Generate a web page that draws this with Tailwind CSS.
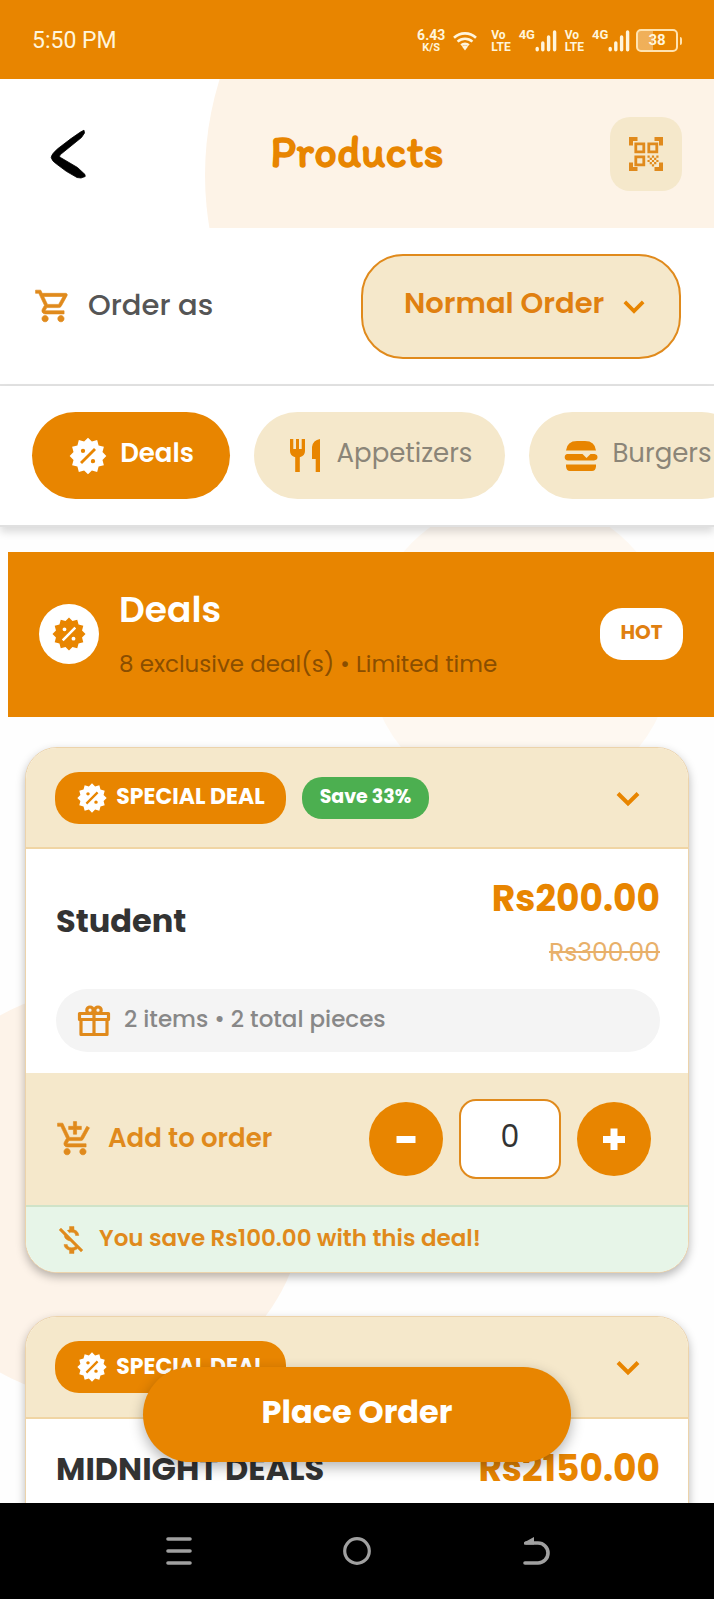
<!DOCTYPE html>
<html lang="en">
<head>
<meta charset="utf-8">
<meta name="viewport" content="width=device-width, initial-scale=1">
<title>Products</title>
<script src="https://cdn.jsdelivr.net/npm/@tailwindcss/browser@4"></script>
</head>
<body class="bg-white font-[Poppins,Inter,sans-serif] text-[#e88500]">

<!-- Shared icon shapes -->
<svg class="hidden" aria-hidden="true">
  <symbol id="percent" viewBox="0 0 24 24"><path fill="currentColor" fill-rule="evenodd" d="M12 1 14.33 3.31 17.5 2.47 18.36 5.64 21.53 6.5 20.69 9.67 23 12 20.69 14.33 21.53 17.5 18.36 18.36 17.5 21.53 14.33 20.69 12 23 9.67 20.69 6.5 21.53 5.64 18.36 2.47 17.5 3.31 14.33 1 12 3.31 9.67 2.47 6.5 5.64 5.64 6.5 2.47 9.67 3.31ZM7.2 15.6l8.4-8.4 1.2 1.2-8.4 8.4zM9 7.6a1.3 1.3 0 1 0 0 2.6 1.3 1.3 0 0 0 0-2.6zM15 13.8a1.3 1.3 0 1 0 0 2.6 1.3 1.3 0 0 0 0-2.6z"/></symbol>
  <symbol id="chevron" viewBox="0 0 24 24"><path d="M2 7.5l10 10 10-10" fill="none" stroke="currentColor" stroke-width="4"/></symbol>
  <symbol id="signal" viewBox="0 0 22 22"><path d="M2.2 18.5v1.3M7.8 13v6.8M13.6 7v12.8M19.6 2v17.8" fill="none" stroke="currentColor" stroke-width="3.4" stroke-linecap="round"/></symbol>
</svg>

<div class="flex h-screen flex-col overflow-hidden">

  <!-- Status bar -->
  <div class="flex h-[79px] shrink-0 items-center justify-between bg-[#e88500] pt-0.5 pr-8 pl-8 font-[Roboto,sans-serif] text-[#fff5dc]">
    <span class="pt-0.5 text-[23px]">5:50 PM</span>
    <div class="flex items-center font-bold">
      <div class="flex flex-col items-center"><span class="text-sm leading-[14px]">6.43</span><span class="text-[11px] leading-[11px]">K/S</span></div>
      <svg class="ml-2 h-5 w-6" viewBox="0 0 24 20"><g fill="none" stroke="currentColor" stroke-width="2.6"><path d="M1 6.8a16 16 0 0 1 22 0M4.6 10.6a11 11 0 0 1 14.8 0M8.2 14.3a5.6 5.6 0 0 1 7.6 0"/></g><path d="M9 15.6a4.3 4.3 0 0 1 6 0l-3 3.9z" fill="currentColor"/></svg>
      <div class="ml-3.5 text-xs leading-[12px]"><div>Vo</div><div>LTE</div></div>
      <span class="ml-2 w-4 self-start text-[13px] leading-[14px]">4G</span>
      <svg class="size-[22px]"><use href="#signal"/></svg>
      <div class="ml-2 text-xs leading-[12px]"><div>Vo</div><div>LTE</div></div>
      <span class="ml-2 w-4 self-start text-[13px] leading-[14px]">4G</span>
      <svg class="size-[22px]"><use href="#signal"/></svg>
      <div class="ml-1.5 flex items-center">
        <div class="flex h-[23px] w-[42px] items-center justify-center rounded-[5px] border-2 border-[#ffe3b0] bg-linear-to-r from-white/35 from-40% to-transparent to-40% text-[15px]">38</div>
        <div class="ml-0.5 h-2 w-0.5 rounded-r bg-[#ffe3b0]"></div>
      </div>
    </div>
  </div>

  <!-- App bar -->
  <header class="relative isolate grid h-[149px] shrink-0 grid-cols-3 items-center overflow-hidden px-8">
    <div class="absolute top-[-224px] left-[205px] -z-10 size-[640px] rounded-full bg-[#fdf3e7]"></div>
    <button type="button" aria-label="Back" class="ml-[18px] w-9 justify-self-start text-black">
      <svg class="h-[50px] w-9" viewBox="0 0 36 50"><path fill="currentColor" stroke="currentColor" stroke-width=".8" d="M34 1.200 30.500 3 21 9.600 8 19.500Q1.500 25 1.200 28.500 2 32 6.500 35 16 43 27 48.500L31 49 35.200 47.500 35 45.500 27.500 38.500 10.500 28.500Q8.600 27.500 10.500 25.500L21 17 31.500 8.500 34.500 4z"/></svg>
    </button>
    <h1 class="justify-self-center pb-1 font-[Itim,'Patrick_Hand','Comic_Neue',Lato,sans-serif] text-[45px] leading-none font-bold">Products</h1>
    <button type="button" aria-label="Scan QR code" class="flex h-[74px] w-[72px] items-center justify-center justify-self-end rounded-[20px] bg-[#f5e8cb]">
      <svg class="size-[34px]" viewBox="0 0 34 34"><g fill="none" stroke="#e08a1c"><path stroke-width="4" d="M2 8.500V2H8.500M25.500 2H32V8.500M2 25.500V32H8.500M32 25.500V32H25.500"/><path stroke-width="2.800" d="M6.800 6.800h8v8h-8zM19.800 6.800h8v8h-8zM6.800 19.800h8v8h-8z"/></g><path fill="#e08a1c" d="M18.500 18.500h2.200v2.200h-2.200zM22.900 18.500h2.200v2.200h-2.200zM20.700 20.700h2.200v2.200h-2.200zM25.100 20.700h2.200v2.200h-2.200zM18.500 22.900h2.200v2.200h-2.200zM22.900 22.900h2.200v2.200h-2.200zM27.300 22.900h2.200v2.200h-2.200zM20.700 25.100h2.200v2.200h-2.200zM25.100 25.100h2.200v2.200h-2.200zM27.300 18.500h2.200v2.200h-2.200zM22.900 27.300h2.200v2.200h-2.200z"/></svg>
    </button>
  </header>

  <!-- Order type -->
  <div class="flex h-[158px] shrink-0 items-center justify-between border-b-2 border-[#e2e2e2] pr-[33px] pl-[34px]">
    <label for="order-type" class="flex items-center gap-4 text-[29px] leading-9 font-medium text-[#555]">
      <svg class="size-[38px] text-[#e08a1c]" viewBox="0 0 24 24" fill="currentColor" stroke="currentColor" stroke-width=".4"><path d="M15.550 13c.75 0 1.410-.41 1.750-1.030l3.580-6.490A.996.996 0 0 0 20.010 4H5.210l-.94-2H1v2h2l3.600 7.590-1.350 2.440C4.520 15.370 5.480 17 7 17h12v-2H7l1.100-2h7.450zM6.160 6h12.150l-2.760 5H8.530L6.160 6zM7 18c-1.100 0-1.990.9-1.990 2S5.900 22 7 22s2-.9 2-2-.9-2-2-2zm10 0c-1.100 0-1.990.9-1.990 2s.89 2 1.990 2 2-.9 2-2-.9-2-2-2z"/></svg>
      <span class="pb-0.5">Order as</span>
    </label>
    <div class="relative">
      <select id="order-type" class="h-[105px] w-80 appearance-none rounded-[42px] border-2 border-[#e08a1c] bg-[#f5e8cb] pb-1 pl-[41px] text-[29px] font-semibold text-[#e08010]">
        <option>Normal Order</option>
      </select>
      <svg class="pointer-events-none absolute top-[41px] right-9 size-[22px]"><use href="#chevron"/></svg>
    </div>
  </div>

  <!-- Categories -->
  <nav class="relative z-10 flex h-[141px] shrink-0 items-center gap-6 overflow-hidden border-b-2 border-[#e0e0e0] bg-white px-8 text-[26px] text-[#8b8578] shadow-[0_5px_8px_rgba(0,0,0,0.14)]">
    <button type="button" class="flex h-[87px] w-[198px] shrink-0 items-center justify-center gap-3 rounded-full bg-[#e88500] font-semibold text-white"><svg class="size-10"><use href="#percent"/></svg><span class="pb-1">Deals</span></button>
    <button type="button" class="flex h-[87px] w-[251px] shrink-0 items-center justify-center gap-3 rounded-full bg-[#f5e8cb]">
      <svg class="size-[38px] text-[#e88500]" viewBox="0 0 38 38" fill="currentColor"><path d="M3 2h3.300v10h2.700V2h3v10h2.700V2H18v12q0 5-5.200 6.200V35H8.200V20.200Q3 19 3 14zM33 2v33h-4.300V22H25V10q1-7 8-8z"/></svg><span class="pb-1">Appetizers</span></button>
    <button type="button" class="flex h-[87px] w-[216px] shrink-0 items-center justify-center gap-3 rounded-full bg-[#f5e8cb]">
      <svg class="size-[38px] text-[#e88500]" viewBox="0 0 38 38" fill="currentColor"><path d="M4 13.500Q5 4 15 4h8q10 0 11 9.500zM5.500 17h15l4 4 4-4h4q3 .5 3 3.200T32 23.500H6q-3.300-.4-3.300-3.300T5.500 17zM4 27.500h30v2q-.5 4.500-4 4.500H8q-3.500 0-4-4.500z"/></svg><span class="pb-1">Burgers</span></button>
  </nav>

  <!-- Deals list -->
  <main class="relative isolate min-h-0 flex-1 overflow-hidden bg-[#fefefe]">
    <div class="absolute top-[-29px] left-[367px] -z-10 size-[306px] rounded-full bg-[#fef8f1]"></div>
    <div class="absolute top-[462px] left-[-104px] -z-10 size-[410px] rounded-full bg-[#fdf3e9]"></div>

    <section class="mt-[25px] ml-2 flex h-[165px] items-center gap-5 bg-[#e88500] px-[31px] pb-0.5">
      <div class="flex size-[60px] shrink-0 items-center justify-center rounded-full bg-white"><svg class="size-9"><use href="#percent"/></svg></div>
      <div class="flex flex-1 flex-col gap-3">
        <h2 class="text-4xl leading-[48px] font-semibold text-white">Deals</h2>
        <p class="text-[23px] leading-9 text-[#8a4e00]">8 exclusive deal(s) • Limited time</p>
      </div>
      <span class="flex h-[52px] w-[83px] items-center justify-center rounded-[22px] bg-white pb-1 text-xl font-bold text-[#e08010]">HOT</span>
    </section>

    <div class="flex flex-col gap-[43px] px-[25px] pt-[30px]">

      <article class="overflow-hidden rounded-[32px] border border-[#ecd3ab] bg-white shadow-[0_4px_10px_rgba(0,0,0,0.28)]">
        <div class="flex h-[101px] items-center gap-4 border-b-2 border-[#f0d5a4] bg-[#f5e8cb] px-[29px]">
          <span class="flex h-[52px] w-[231px] items-center justify-center gap-2 rounded-[24px] bg-[#e88500] text-[22px] font-bold text-white"><svg class="size-8"><use href="#percent"/></svg><span class="pb-0.5">SPECIAL DEAL</span></span>
          <span class="flex h-[42px] w-[127px] items-center justify-center rounded-[20px] bg-[#4caf50] text-[19px] font-bold text-white">Save 33%</span>
          <button type="button" aria-label="Expand Student deal" class="mr-[19px] ml-auto"><svg class="size-6"><use href="#chevron"/></svg></button>
        </div>
        <div class="pt-[26px] pr-7 pb-[21px] pl-[30px]">
          <div class="flex items-center justify-between">
            <h3 class="pb-1 text-[32px] leading-10 font-bold text-[#333]">Student</h3>
            <div class="flex flex-col items-end gap-3">
              <span class="text-4xl leading-[48px] font-bold">Rs200.00</span>
              <s class="text-[25px] leading-9 text-[#e8b06a]">Rs300.00</s>
            </div>
          </div>
          <div class="mt-[18px] flex h-[63px] items-center gap-3 rounded-full bg-[#f4f4f4] px-5 text-[23px] font-medium text-[#888]">
            <svg class="size-9 text-[#e08a1c]" viewBox="0 0 36 36" fill="none" stroke="currentColor" stroke-width="3.200" stroke-linejoin="round"><path d="M3.500 10.500h29v6h-29zM5 16.500h26v15H5zM18 10.500v21"/><circle cx="14" cy="7.200" r="3.200"/><circle cx="22" cy="7.200" r="3.200"/></svg>
            <span class="pb-0.5">2 items • 2 total pieces</span>
          </div>
        </div>
        <div class="flex h-[132px] items-center justify-between bg-[#f5e8cb] pr-[37px] pl-[30px]">
          <label for="qty-student" class="flex items-center gap-3.5 text-[26px] font-semibold text-[#e08a1c]">
            <svg class="size-[38px]" viewBox="0 0 24 24" fill="currentColor" stroke="currentColor" stroke-width=".4"><path d="M11 9h2V6h3V4h-3V1h-2v3H8v2h3v3zm-4 9c-1.100 0-1.990.9-1.990 2S5.900 22 7 22s2-.9 2-2-.9-2-2-2zm10 0c-1.100 0-1.990.9-1.990 2s.89 2 1.990 2 2-.9 2-2-.9-2-2-2zm-9.830-3.250.03-.12.9-1.630h7.450c.75 0 1.410-.41 1.750-1.030l3.860-7.010L19.420 4h-.01l-1.100 2-2.760 5H8.530l-.13-.27L6.160 6l-.95-2-.94-2H1v2h2l3.600 7.590-1.350 2.450c-.16.28-.25.61-.25.96 0 1.100.9 2 2 2h12v-2H7.420c-.13 0-.25-.11-.25-.25z"/></svg>
            <span class="pb-0.5">Add to order</span>
          </label>
          <div class="flex items-center gap-4">
            <button type="button" aria-label="Decrease" class="flex size-[74px] items-center justify-center rounded-full bg-[#e88500]"><svg class="size-[22px]" viewBox="0 0 22 22"><path d="M1.500 11.500h19" stroke="#fff" stroke-width="7"/></svg></button>
            <input id="qty-student" type="text" inputmode="numeric" value="0" class="h-20 w-[102px] rounded-[17px] border-2 border-[#e08a1c] bg-white pb-1 text-center text-[30px] text-[#333]">
            <button type="button" aria-label="Increase" class="flex size-[74px] items-center justify-center rounded-full bg-[#e88500]"><svg class="size-[22px]" viewBox="0 0 22 22"><path d="M0 11.500h22M11 0.500v21.500" stroke="#fff" stroke-width="7"/></svg></button>
          </div>
        </div>
        <div class="flex h-[67px] items-center gap-2.5 border-t-2 border-[#cfe3c8] bg-[#e7f5e8] px-[27px] text-[23px] font-semibold text-[#e08a1c]">
          <svg class="size-9" viewBox="0 0 24 24" fill="currentColor" stroke="currentColor" stroke-width=".3"><path d="M12.500 6.900c1.780 0 2.440.85 2.500 2.100h2.210c-.07-1.720-1.120-3.300-3.210-3.810V3h-3v2.160c-.53.12-1.030.3-1.480.54l1.470 1.470c.41-.17.91-.27 1.510-.27zM5.330 4.060 4.060 5.330 7.500 8.770c0 2.080 1.560 3.210 3.910 3.910l3.510 3.510c-.34.48-1.050.91-2.420.91-2.060 0-2.870-.92-2.980-2.100h-2.200c.12 2.190 1.760 3.420 3.680 3.830V21h3v-2.150c.96-.18 1.820-.55 2.450-1.120l2.220 2.220 1.270-1.270L5.330 4.060z"/></svg>
          <span class="pb-0.5">You save Rs100.00 with this deal!</span>
        </div>
      </article>

      <article class="overflow-hidden rounded-[32px] border border-[#ecd3ab] bg-white shadow-[0_4px_10px_rgba(0,0,0,0.28)]">
        <div class="flex h-[102px] items-center border-b-2 border-[#f0d5a4] bg-[#f5e8cb] px-[29px]">
          <span class="flex h-[52px] w-[231px] items-center justify-center gap-2 rounded-[24px] bg-[#e88500] text-[22px] font-bold text-white"><svg class="size-8"><use href="#percent"/></svg><span class="pb-0.5">SPECIAL DEAL</span></span>
          <button type="button" aria-label="Expand Midnight deal" class="mr-[19px] ml-auto"><svg class="size-6"><use href="#chevron"/></svg></button>
        </div>
        <div class="flex items-center justify-between pt-[26px] pr-7 pb-12 pl-[30px]">
          <h3 class="text-[32px] leading-10 font-bold text-[#333]">MIDNIGHT DEALS</h3>
          <span class="text-4xl leading-[48px] font-bold">Rs2150.00</span>
        </div>
      </article>
    </div>

    <div class="absolute inset-x-0 bottom-[41px] flex justify-center">
      <button type="button" class="h-[95px] w-3/5 rounded-full bg-[#e88500] pb-1.5 text-[32px] font-bold text-white shadow-[0_5px_14px_rgba(0,0,0,0.3)]">Place Order</button>
    </div>
  </main>

  <!-- System navigation -->
  <nav class="grid h-24 shrink-0 grid-cols-8 items-center justify-items-center bg-black text-[#a0a0a0]">
    <button type="button" aria-label="Recent apps" class="col-span-2 col-start-2"><svg class="size-7" viewBox="0 0 28 28" fill="none" stroke="currentColor" stroke-width="3.600" stroke-linecap="round"><path d="M3 2h22M3 14h22M3 26h22"/></svg></button>
    <button type="button" aria-label="Home" class="col-span-2"><svg class="size-7" viewBox="0 0 28 28" fill="none" stroke="currentColor" stroke-width="3.200"><circle cx="14" cy="14" r="12.300"/></svg></button>
    <button type="button" aria-label="Back" class="col-span-2"><svg class="size-7" viewBox="0 0 28 28" fill="none" stroke="currentColor" stroke-width="3.600" stroke-linecap="round"><path d="M3 26h13a9.800 9.800 0 0 0 0-20H4"/><path d="M2 7.500V5.500L12 0v7.500z" fill="currentColor" stroke="none"/></svg></button>
  </nav>
</div>
</body>
</html>
